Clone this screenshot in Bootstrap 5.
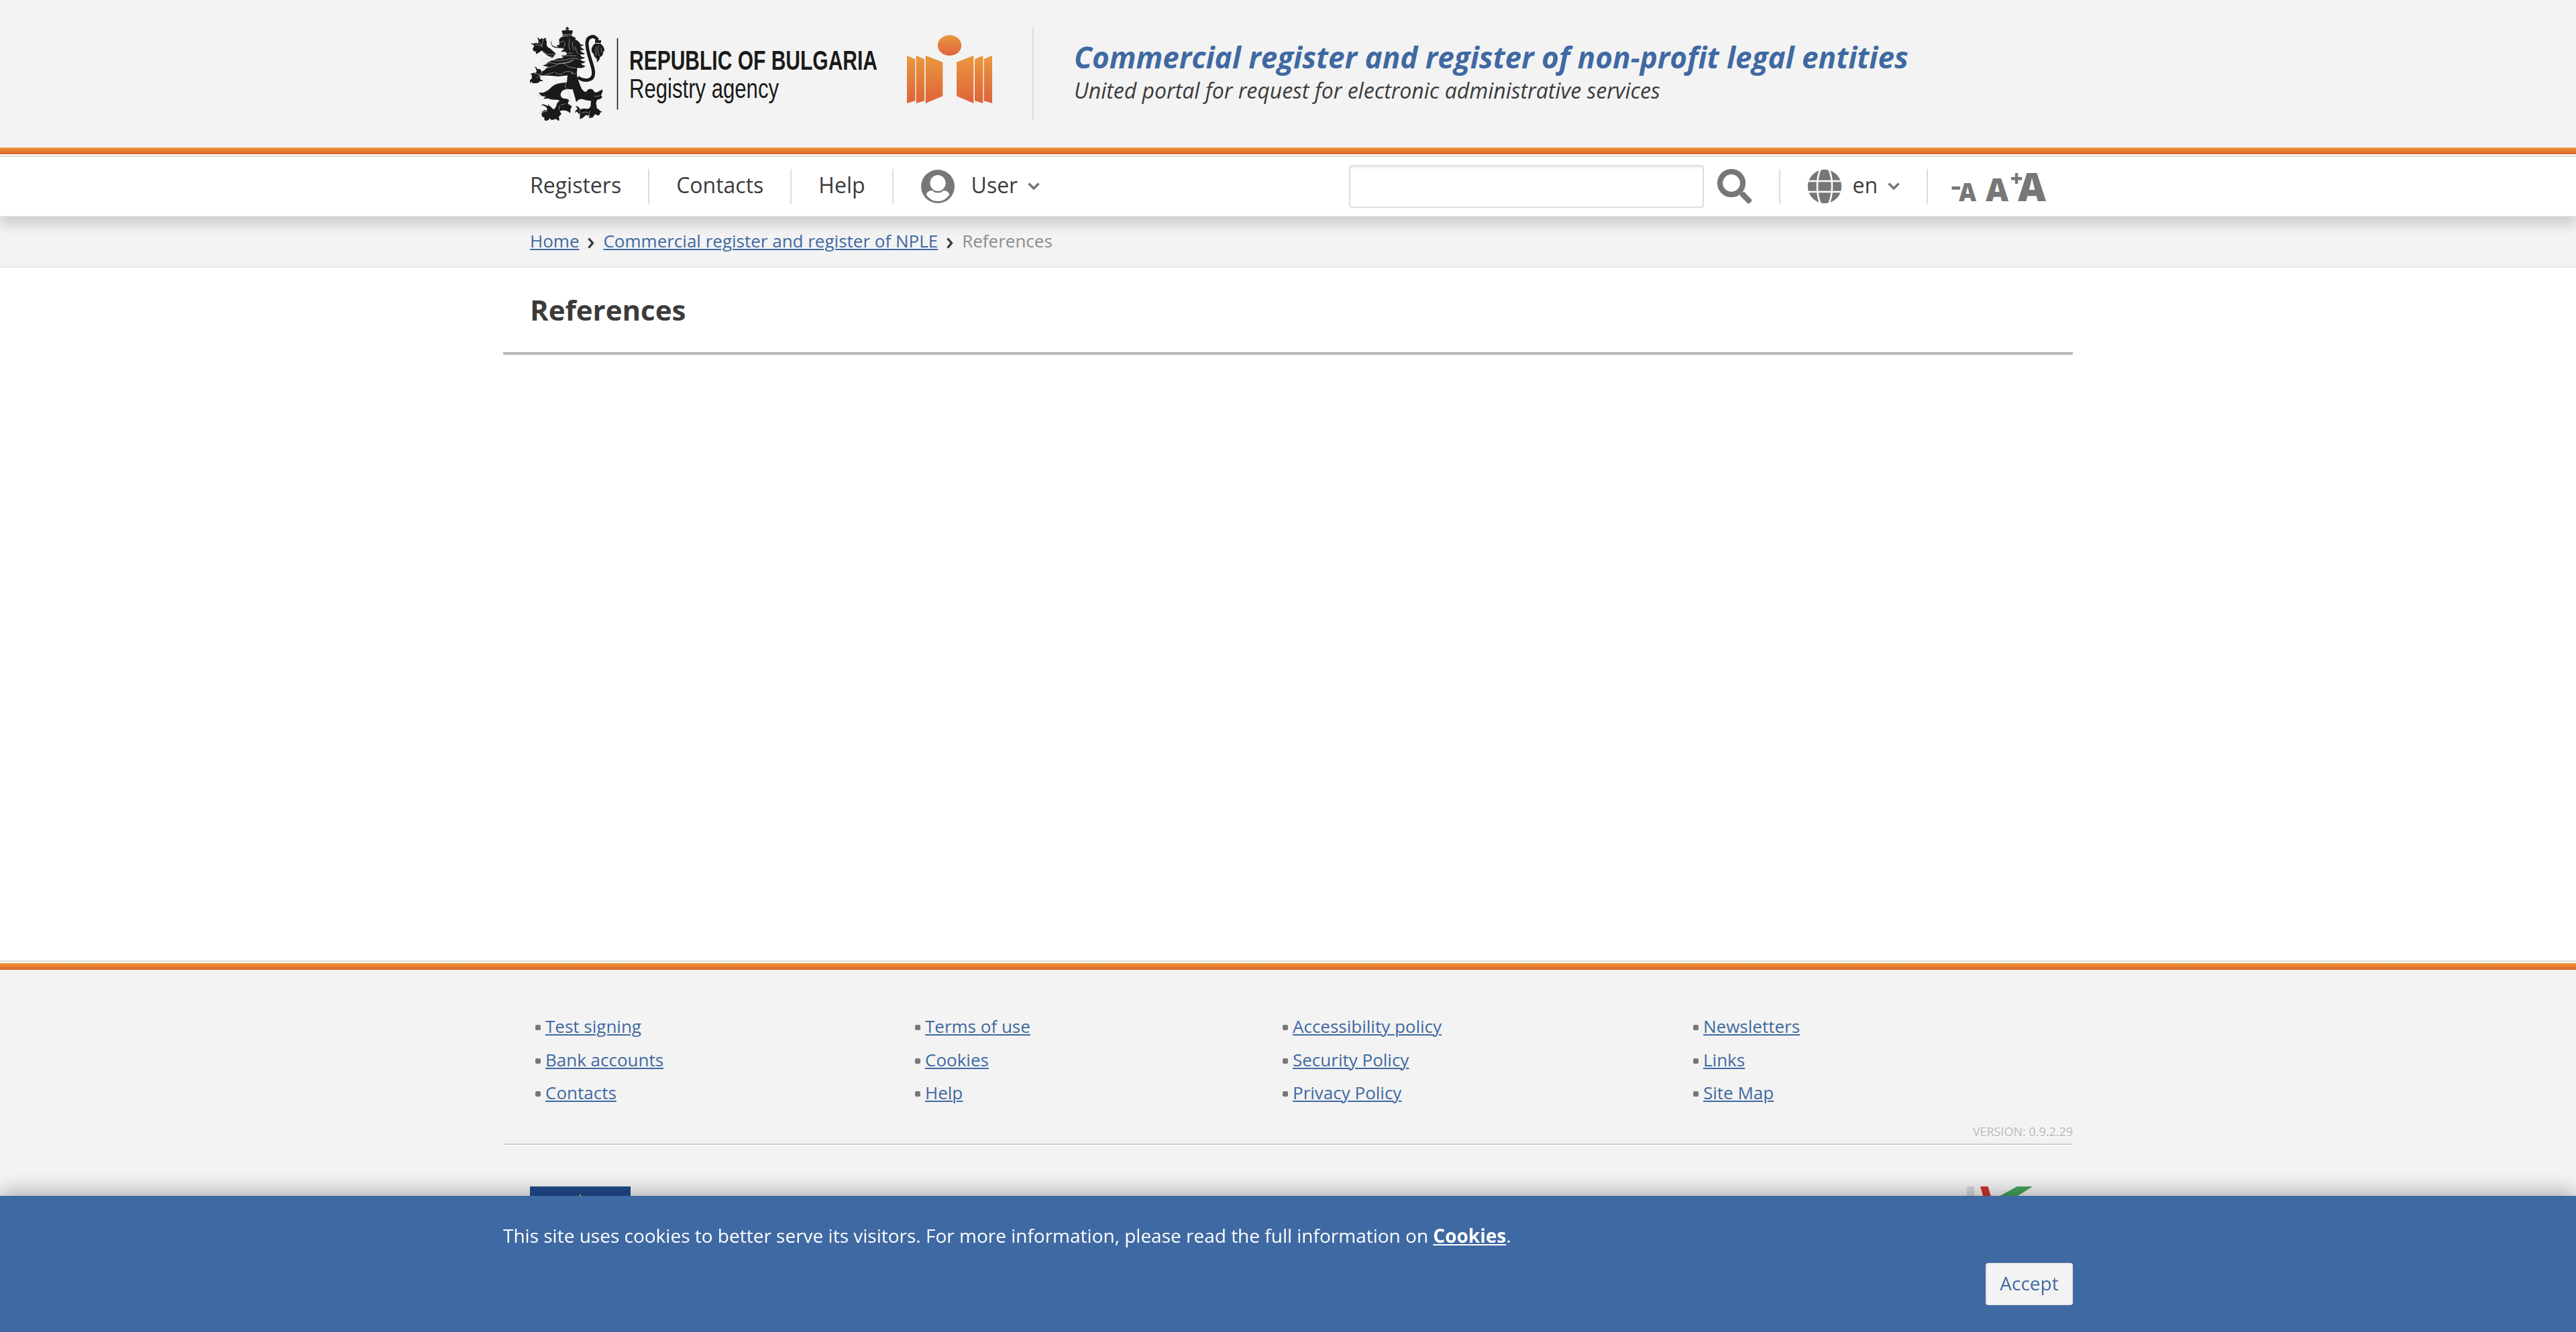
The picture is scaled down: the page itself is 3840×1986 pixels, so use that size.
<!DOCTYPE html>
<html lang="en">
<head>
<meta charset="utf-8">
<title>References</title>
<meta name="viewport" content="width=device-width, initial-scale=1">
<link href="https://cdn.jsdelivr.net/npm/bootstrap@5.3.0/dist/css/bootstrap.min.css" rel="stylesheet">
<style>
body{font-family:"Open Sans","Noto Sans",sans-serif;color:#3b3b3b;background:#fff;font-size:26px;height:1986px;overflow:hidden}
.wrap{width:2340px;margin:0 auto;padding:0 40px}
a{color:#3f69a2;text-decoration:underline;text-decoration-thickness:2px;text-underline-offset:2px}
.site-head{background:#f3f3f3;height:220px;padding-top:40px}
.logo{width:749px;height:140px;display:block}
.head-text{border-left:2px solid #ddd;height:140px;padding:18px 0 0 60px}
.portal{font-size:44px;line-height:54px;font-weight:700;font-style:italic;color:#3f69a2}
.portal-sub{font-size:32px;line-height:46px;font-style:italic}
.stripe{height:10px;background:linear-gradient(#f0983a,#da642c)}
.top-nav{height:92px;background:#fff;border-top:2px solid #dcdcdf;border-bottom:2px solid #ddd;margin-top:2px;box-shadow:0 12px 16px rgba(0,0,0,.15);position:relative;z-index:2;font-size:32px}
.top-nav .wrap{height:88px}
.entry{height:52px;line-height:48px;padding:0 40px;border-right:2px solid #ddd;white-space:nowrap;display:flex}
.entry.first{padding-left:0}
.entry.plain{border-right:0}
.entry.finder{padding-left:20px}
.entry a{color:#3b3b3b;text-decoration:none}
.entry svg{flex:none}
.user-link{margin:0 15px 0 24px}
.lang-link{margin:0 15px}
.search-box{width:529px;height:64px;border:2px solid #ddd;border-radius:4px;box-shadow:inset 0 3px 2px #f0f0f0;padding:0 16px;outline:0}
.sizer{overflow:visible;flex:none}
.crumbs{background:#f3f3f3;height:75px;border-bottom:2px solid #e8e8e8;padding-top:17px;line-height:36px}
.crumbs svg{margin:13px 13px 0 13px}
.here{color:#8c8c8c}
main{height:1033px;padding-top:38px}
h1{font-size:42px;line-height:50px;font-weight:700;margin:0;padding:0 40px 38px;border-bottom:4px solid #b8b8b8;width:2340px}
.site-foot{background:#f3f3f3;height:556px}
.foot-line{border-top:2px solid #ddd;height:4px;background:#fff}
.foot-links{padding:60px 0 0 48px;height:229px;line-height:49.5px}
.foot-links ul{flex:none}
.foot-links li{display:flex;height:49.5px}
.foot-links li::before{content:"";width:8px;height:8px;border-radius:2px;background:#777;margin:22px 7px 0 0;flex:none}
.w1{width:566px}.w2{width:548px}.w3{width:612px}
.version{font-size:18px;line-height:24px;height:30px;color:#b8b8b8;text-shadow:0 2px 0 #fff}
.rule{height:4px;border-top:2px solid #ccc;background:#fff}
.partners{padding:60px 40px 0}
.cookie-bar{background:#3f69a2;height:203px;color:#fff;font-size:28px;line-height:42px;padding-top:38px;box-shadow:0 -4px 30px rgba(0,0,0,.32)}
.cookie-bar .wrap{padding:0}
.cookie-bar a{color:#fff;font-weight:700}
.accept{width:130px;height:63px;background:#f3f3f3;border:2px solid #e6e6e6;border-radius:4px;color:#3f69a2;font-size:28px;line-height:54px;padding:0 0 3px;margin-top:20px;display:block}
</style>
</head>
<body class="d-flex flex-column">
<header class="site-head flex-shrink-0">
 <div class="wrap d-flex">
  <svg class="logo flex-shrink-0" viewBox="790 40 749 140">
   <defs><linearGradient id="og" x1="0" y1="0" x2="0" y2="1"><stop offset="0" stop-color="#e9983f"/><stop offset="1" stop-color="#de6339"/></linearGradient></defs>
   <g transform="translate(780 30) scale(.33333)" fill="#1a1a1a">
    <!-- crown -->
    <path d="M194 30h6v5h5v5h-5v6h-6v-6h-5v-5h5zM172 50q4-8 11-3q7-7 14-1q7-6 14 1q8-5 11 4l-5 13h-40zM175 65h42v5h-42z"/>
    <!-- head and mane -->
    <path d="M160 86q8-12 24-14l30-2q14 4 22 12q-4 4-4 6q16 4 22 18q8 6 17 4q-6 8-15 6q2 10 18 14q-8 8-20 3q4 12 22 16q-8 8-22 4q2 12 22 14q-8 10-22 6q6 12 24 12q-6 10-20 8q6 10 20 12q-12 14-34 8q-8 14-22 22l-100 8l-18-10l22-10l-30-2l16-12l-26-6l24-8l-8-2l20-10l34-12q22-2 24-4q-8-4-10-8l10-2q14 2 14-6l-4-10q-14 2-22 0l16-12q-10-6-22-4q-8-6-12-12q6-4 12-2z"/>
    <path d="M134 92q-9 0-9 10q2 18 34 18l14-2q-2 8-12 6q-36 2-38-22q0-10 11-10z"/>
    <!-- raised foreleg -->
    <path d="M62 78q8 0 12 8q8-8 16-2q4-4 14-4q-6 6-2 10q6 8 2 16l2 10q6 8 16 12l24 22l-16 20q-32-14-48-34q-10 10-24 16q-4-6 0-12q-12 2-14-6q-4-8 4-14q2-6-2-8q-8-2-12-10q8 4 14 2q8-4 16 0q6-4 4-12q-2-8-6-14z"/>
    <!-- lower foreleg -->
    <path d="M50 208q10 2 14 12q8-4 14 2l4 8q40-22 110-42l44 20l-10 36l-68 8q-40-6-84-4q4 8 0 14q6 8 16 8q-8 6-16 2q-4 12-24 10q-8 4-12-6q-8 2-8 10q-4-8-2-14q6-10 12-10q-4-8 0-14q-6-8-10 0q4-10 10-10q8-4 16-2q6-6 2-14q-2-8-8-14z"/>
    <!-- torso and rear legs -->
    <path d="M238 190q4 30 2 42q-2 16 8 42q6 20 14 34q8 12 18 14q10-16 24-14q10 2 14 14q14 4 24-6q6-2 13-6q0 18-8 26q6 4 6 8q-6 10-22 12q-8 12-4 22l2 16q8 6 14 10q0 4 10 4q-4 6-10 6q2 12-10 12q-4 0-12-6q-8 14-12 16l-14 2q-4-4 4-12q-8 4-18-2q-8 8-16 14q-10 2-14 4q4-8 2-22q-8 0-10-10q-8-2-10 6q-2-6 2-12q4-4 8-4q-2-12-10-16q14 0 22 16q12-6 24-4q14 4 22-10l2-26q-18 2-36-6q-10-2-20 2q-4 6-10 10q-4-14-6-22l-10-34q-24-2-40 2q-14 8-14 22q0 12 12 16q22 0 26 10q-4 6-6 14q14 6 18 12q-2 8-6 12q2 10-2 18q-14-14-34-12q-6 0-12 4q4 8 8 10q-4 8-12 14q4 14 0 20q-8-8-16-10q-8 6-18 4q-4-2-6-8q-4 12-20 12q-8-4-4-14q-8-2-12-8q-2-12 2-20q8-8 20-4q4-8-2-14q-6-4-14-8q-6-2-10 0q8-8 16-4q10 4 16 6q0-4 2-8l4 8q12 6 18 16q12-8 14-22q4-12 14-18q-12-6-24-4q-16 0-28-6q-12 0-20 4q4-6 8-10q-20-2-30-20q6 2 22 0q18-8 26-16q20-22 48-26l30-4l2-20l6-60z"/>
    <!-- tail -->
    <path d="M244 256C270 275 314 276 314 236C314 200 282 145 285 100C289 68 322 66 332 90" fill="none" stroke="#1a1a1a" stroke-width="15"/>
    <path d="M321 90h27v12h-27zM321 105h24q18 14 18 30q-2 8-6 6q2 20-14 24q0 14-14 24q2-14-2-18q-12-8-12-20q-10-6-10-18q2-18 16-28z"/>
    <!-- light inner contours -->
    <g fill="none" stroke="#ccc" stroke-width="1.8">
     <path d="M84 136q14 18 40 18q50 2 96-8M96 150q20 22 56 14q34-8 86-4M78 180q20-10 36-4q40 12 100-4q20-4 36 4M92 194q30-8 60 2q40-4 76-18M88 214q40 0 72-20q40 2 62-14"/>
     <path d="M158 100q12 2 22-8M184 96q6 18-6 26M208 84q-8 30 2 52M220 96q-4 20 8 40M232 118q2 20 14 34M180 190q20 26 58 24M100 244q20-4 36-10M144 234q12 12 28 8q18-20 50-8q-18 10 14 4M178 258q14 8 12 26q-6 14 4 28"/>
     <path d="M52 110q20-2 28 8M66 100q16 4 20 22M90 84q-2 20-10 32M48 240q14-2 26 4M60 258q8-10 22-12M84 226q0 14-12 22M78 396q4 12-6 20M94 400q-2 14-20 14M108 408q-16 0-30 8M250 400q6 12 4 22M262 416q14-10 28-2M300 406q-6 8-8 24M318 340q14 2 26-2M60 336q22 8 42 4M168 378q12 2 20-6M160 400q4-14 0-18M198 306q8 26 16 60M336 112q-6 30 4 50M326 120q-4 20 0 40M348 124q0 14 4 20"/>
    </g>
   </g>
   <path d="M920.5 57V163.500" stroke="#1a1a1a" stroke-width="1.6"/>
   <g font-family="Liberation Sans, Arial, sans-serif" fill="#1a1a1a">
    <text x="938" y="104" font-size="41" font-weight="700" textLength="370" lengthAdjust="spacingAndGlyphs">REPUBLIC OF BULGARIA</text>
    <text x="938" y="146" font-size="40" textLength="223" lengthAdjust="spacingAndGlyphs">Registry agency</text>
   </g>
   <g transform="translate(1340 40) scale(.33333)" fill="url(#og)">
    <ellipse cx="226.500" cy="83" rx="53" ry="46"/>
    <path d="M36 128L73 145V331L36 342zM77 128L114 145V331L77 342zM119 128L196 158V310L119 342zM334 128L258 158V310L334 342zM376 128L339 145V331L376 342zM417 128L380 145V331L417 342z"/>
   </g>
  </svg>
  <div class="head-text">
   <div class="portal">Commercial register and register of non-profit legal entities</div>
   <div class="portal-sub">United portal for request for electronic administrative services</div>
  </div>
 </div>
</header>
<div class="stripe flex-shrink-0"></div>
<nav class="top-nav flex-shrink-0">
 <div class="wrap d-flex align-items-center">
  <div class="entry first"><a href="#">Registers</a></div>
  <div class="entry"><a href="#">Contacts</a></div>
  <div class="entry"><a href="#">Help</a></div>
  <div class="entry plain">
   <svg width="52" height="52" viewBox="0 0 52 52"><circle cx="26" cy="26" r="25" fill="#777"/><path d="M8.500 38Q11 32 17.500 32Q21 35.500 26 35.500Q31 35.500 34.500 32Q41 32 43.500 38Q37 48 26 48Q15 48 8.500 38z" fill="#fff"/><ellipse cx="26" cy="21" rx="11.500" ry="12" fill="#fff"/></svg>
   <a href="#" class="user-link">User</a>
   <svg width="18" height="52" viewBox="0 0 18 52"><path d="M1.500 21.500L9 29L16.500 21.500" fill="none" stroke="#777" stroke-width="3.600"/></svg>
  </div>
  <div class="d-flex align-items-center ms-auto">
   <input class="search-box" type="text" aria-label="Search">
   <div class="entry finder"><svg width="52" height="52" viewBox="0 0 52 52"><circle cx="21" cy="21" r="17" fill="none" stroke="#777" stroke-width="8.200"/><path d="M34 35l6-1 11 11.500q1 1.500 0 2.500l-3 3q-1.500 1-3 0l-11-11z" fill="#777"/></svg></div>
   <div class="entry">
    <svg width="52" height="52" viewBox="0 0 52 52"><circle cx="26" cy="26" r="25.200" fill="#777"/><g fill="none" stroke="#fff" stroke-width="2.600"><path d="M20 0Q15 10 15 26T20 52M32 0Q37 10 37 26T32 52M0 18H52M0 34H52"/></g></svg>
    <a href="#" class="lang-link">en</a>
    <svg width="18" height="52" viewBox="0 0 18 52"><path d="M1.500 21.500L9 29L16.500 21.500" fill="none" stroke="#777" stroke-width="3.600"/></svg>
   </div>
   <svg class="sizer" width="176" height="88" viewBox="2874 234 176 88" fill="#777" font-family="Open Sans, sans-serif" font-weight="800">
    <path d="M2909.500 278h12.500v4.800h-12.500zM2998 264h5.800v-6h4.400v6h6v4.400h-6v5.600h-4.400v-5.600h-5.800z"/>
    <text x="2920" y="300" font-size="36.400" textLength="26" lengthAdjust="spacingAndGlyphs">A</text>
    <text x="2960" y="300" font-size="47.600" textLength="34" lengthAdjust="spacingAndGlyphs">A</text>
    <text x="3008" y="300" font-size="58.800" textLength="42" lengthAdjust="spacingAndGlyphs">A</text>
   </svg>
  </div>
 </div>
</nav>
<div class="crumbs flex-shrink-0">
 <div class="wrap d-flex">
  <a href="#">Home</a>
  <svg width="10" height="17" viewBox="0 0 10 17"><path d="M1.500 1.500L7.500 8.500L1.500 15.500" fill="none" stroke="#3b3b3b" stroke-width="3.400"/></svg>
  <a href="#">Commercial register and register of NPLE</a>
  <svg width="10" height="17" viewBox="0 0 10 17"><path d="M1.500 1.500L7.500 8.500L1.500 15.500" fill="none" stroke="#3b3b3b" stroke-width="3.400"/></svg>
  <span class="here">References</span>
 </div>
</div>
<main class="flex-shrink-0"><h1 class="mx-auto">References</h1></main>
<footer class="site-foot flex-shrink-0">
 <div class="foot-line"></div>
 <div class="stripe"></div>
 <div class="wrap px-0">
  <div class="foot-links d-flex">
   <ul class="list-unstyled mb-0 w1"><li><a href="#">Test signing</a></li><li><a href="#">Bank accounts</a></li><li><a href="#">Contacts</a></li></ul>
   <ul class="list-unstyled mb-0 w2"><li><a href="#">Terms of use</a></li><li><a href="#">Cookies</a></li><li><a href="#">Help</a></li></ul>
   <ul class="list-unstyled mb-0 w3"><li><a href="#">Accessibility policy</a></li><li><a href="#">Security Policy</a></li><li><a href="#">Privacy Policy</a></li></ul>
   <ul class="list-unstyled mb-0"><li><a href="#">Newsletters</a></li><li><a href="#">Links</a></li><li><a href="#">Site Map</a></li></ul>
  </div>
  <div class="version text-end">VERSION: 0.9.2.29</div>
  <div class="rule"></div>
  <div class="partners d-flex justify-content-between">
   <svg width="150" height="100" viewBox="0 0 150 100"><path d="M0 0h150v100H0z" fill="#204b8d"/><path d="M75 10.500l1.500 4h4l-3.300 2.500 1.300 4-3.500-2.400-3.500 2.400 1.300-4-3.300-2.500h4z" fill="#f5d90a"/></svg>
   <svg width="120" height="100" viewBox="2930 1769 120 100"><path d="M2931.500 1769h11.500v60h-11.500z" fill="#d8dada"/><path d="M2952 1769h11.500l14 50h-11z" fill="#d2302d"/><path d="M3007 1769h23l-60 38v-18z" fill="#48a35a"/></svg>
  </div>
 </div>
</footer>
<div class="cookie-bar fixed-bottom">
 <div class="wrap">
  <div>This site uses cookies to better serve its visitors. For more information, please read the full information on <a href="#">Cookies</a>.</div>
  <button class="accept ms-auto" type="button">Accept</button>
 </div>
</div>
<script src="https://cdn.jsdelivr.net/npm/bootstrap@5.3.0/dist/js/bootstrap.bundle.min.js"></script>
</body>
</html>
